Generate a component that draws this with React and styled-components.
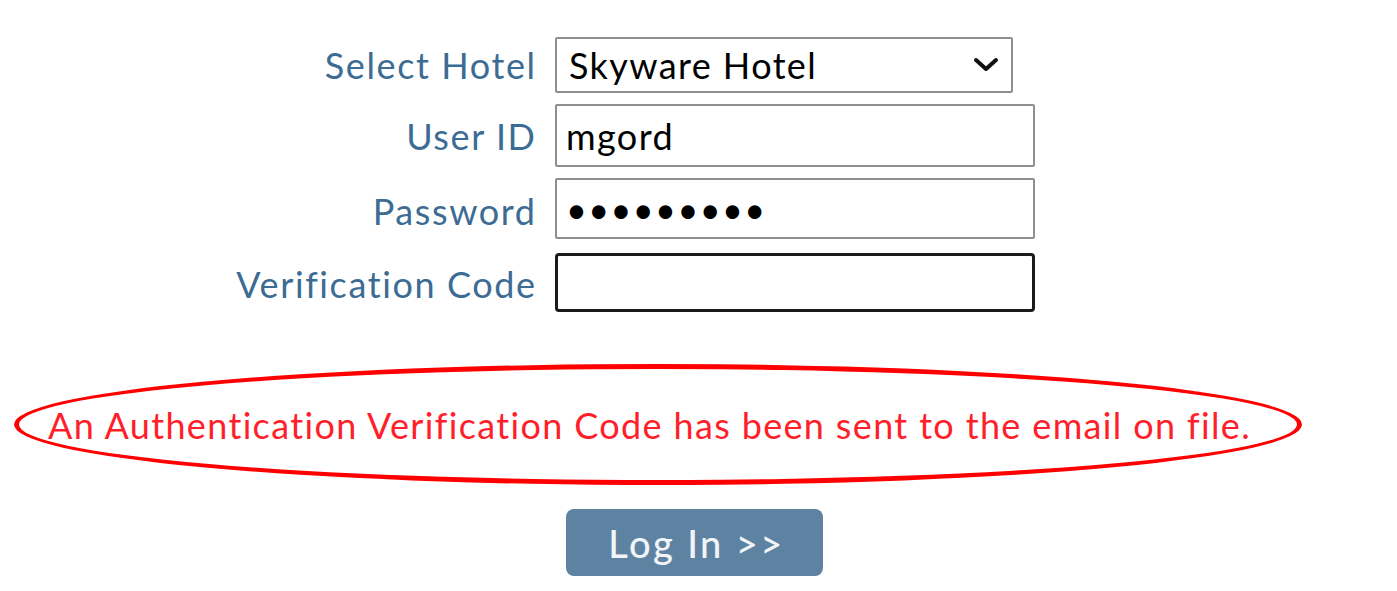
import React from "react";
import styled, { createGlobalStyle } from "styled-components";

const GlobalStyle = createGlobalStyle`
  body {
    margin: 0;
    background: #ffffff;
    font-family: Lato, "Open Sans", sans-serif;
  }
`;

const Page = styled.div`
  width: 1397px;
  height: 591px;
  padding-top: 37px;
  box-sizing: border-box;
  overflow: hidden;
`;

const Form = styled.div`
  display: grid;
  grid-template-columns: 535px 480px;
  column-gap: 20px;
  row-gap: 11px;
  align-items: center;
`;

const Label = styled.label`
  text-align: right;
  font-size: 36px;
  letter-spacing: 1.6px;
  margin-right: -1.6px;
  color: #3c6c94;
  line-height: 1;
  padding-top: ${(p) => p.pt || 0}px;
`;

const Field = styled.div`
  height: ${(p) => p.h}px;
  margin-top: ${(p) => p.mt || 0}px;
  position: relative;
  width: ${(p) => p.w || 480}px;
`;

const Input = styled.input`
  width: 100%;
  height: 100%;
  box-sizing: border-box;
  border: ${(p) => (p.$focus ? "3px solid #1a1a1a" : "2px solid #8f8f8f")};
  border-radius: ${(p) => (p.$focus ? "4px" : "2px")};
  padding: 0 9px;
  font-family: Lato, sans-serif;
  font-size: 36px;
  letter-spacing: 1.4px;
  color: #000;
  outline: none;
  background: #fff;
`;

const Select = styled.select`
  width: 100%;
  height: 100%;
  box-sizing: border-box;
  border: 2px solid #8f8f8f;
  border-radius: 2px;
  padding: 0 12px;
  font-family: Lato, sans-serif;
  font-size: 36px;
  letter-spacing: 1.4px;
  color: #000;
  background: #fff;
  appearance: none;
  -webkit-appearance: none;
  outline: none;
`;

const Chevron = styled.svg`
  position: absolute;
  right: 14px;
  top: 50%;
  transform: translateY(-50%);
  pointer-events: none;
`;

const MessageRow = styled.div`
  margin-top: 52px;
  padding-left: 14px;
`;

const Ellipse = styled.div`
  display: inline-flex;
  align-items: center;
  width: 1288px;
  height: 121px;
  box-sizing: border-box;
  border: 5px solid #ff0000;
  border-radius: 50%;
  padding-left: 29px;
`;

const Message = styled.span`
  font-size: 36px;
  letter-spacing: 1.35px;
  color: #ff1f2a;
  white-space: nowrap;
`;

const ButtonRow = styled.div`
  margin-top: 24px;
  padding-left: 566px;
`;

const LoginButton = styled.button`
  width: 257px;
  height: 67px;
  border: none;
  border-radius: 8px;
  background: #5e83a2;
  color: #f2f5f8;
  font-family: Lato, sans-serif;
  font-size: 38px;
  font-weight: 500;
  letter-spacing: 2.4px;
  padding: 0 0 0 4px;
  cursor: pointer;
`;

export default function App() {
  return (
    <Page>
      <GlobalStyle />
      <Form>
        <Label>Select Hotel</Label>
        <Field h={56} w={458}>
          <Select defaultValue="skyware">
            <option value="skyware">Skyware Hotel</option>
          </Select>
          <Chevron width="26" height="16" viewBox="0 0 26 16">
            <path d="M3 3 L13 12 L23 3" fill="none" stroke="#111" strokeWidth="4" strokeLinecap="round" strokeLinejoin="round" />
          </Chevron>
        </Field>
        <Label>User ID</Label>
        <Field h={63}>
          <Input type="text" defaultValue="mgord" />
        </Field>
        <Label pt={4}>Password</Label>
        <Field h={61}>
          <Input type="password" defaultValue="mgord1234" />
        </Field>
        <Label pt={6}>Verification Code</Label>
        <Field h={59} mt={3}>
          <Input type="text" $focus defaultValue="" />
        </Field>
      </Form>
      <MessageRow>
        <Ellipse>
          <Message>An Authentication Verification Code has been sent to the email on file.</Message>
        </Ellipse>
      </MessageRow>
      <ButtonRow>
        <LoginButton>Log In &gt;&gt;</LoginButton>
      </ButtonRow>
    </Page>
  );
}
